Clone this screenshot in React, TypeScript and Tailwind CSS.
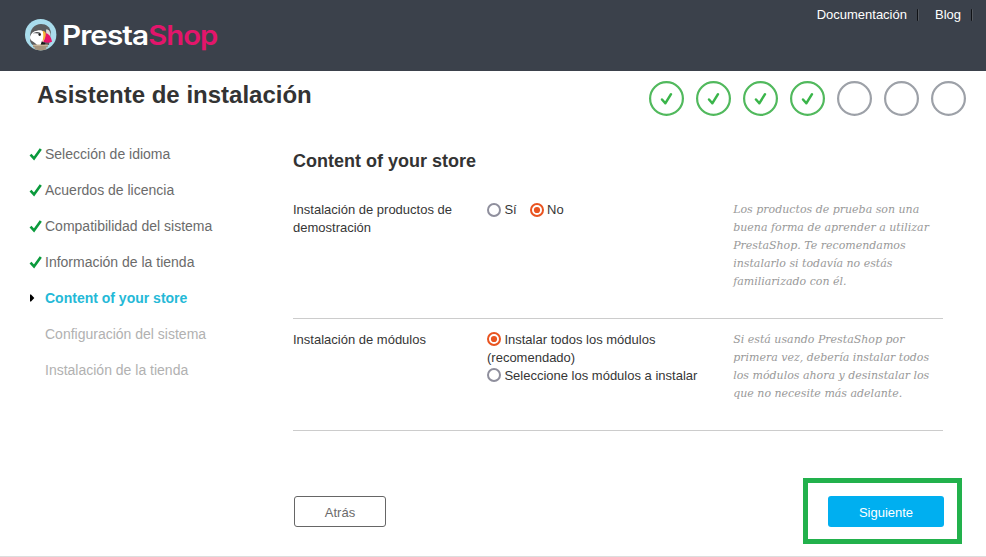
import React from "react";

function Logo() {
  return (
    <svg width="198" height="44" viewBox="0 0 198 44" role="img" aria-label="PrestaShop">
      <defs>
        <clipPath id="badge">
          <circle cx="16.700" cy="15.700" r="15.700" />
        </clipPath>
      </defs>
      <g clipPath="url(#badge)">
        <rect width="34" height="32" fill="#a9dcec" />
        <path d="M6 18C6 10 10.500 5 17 5C22.500 5 26 8 26.800 13L25 26H10C7 24 6 22 6 18Z" fill="#5b5c5e" />
        <path d="M6 18C7 14.500 9.500 12 13 11.800C17 10.500 20.500 12 21 17C21 22 20 25 17 26.500H10.500C7.500 24 6 21.500 6 18Z" fill="#fff" />
        <path d="M6 20C8 22.500 11 23.500 13.500 26.500H9.500C7 25 6 23 6 20Z" fill="#5b5c5e" />
        <path d="M9 14.500C11 12.800 14.500 12.500 16.500 14L16 15C14 14.200 11.500 14 9 14.500Z" fill="#5b5c5e" />
        <circle cx="15.700" cy="15.600" r="1.300" fill="#222" />
        <path d="M22 10.500C24.500 10 26.500 12 26.200 16.500L22.500 18Z" fill="#dededb" />
        <path d="M18.700 11.800C21.500 12 22.800 15 21.800 18.500L18.200 23C19.600 19 19.600 15.500 18.700 11.800Z" fill="#f6b333" />
        <path d="M21.700 14.200C25 14.500 27.500 18.500 28 22.800C25 24.400 22 24 19 22.600C21 20 22 17.500 21.700 14.200Z" fill="#e71568" />
        <path d="M17.800 22.300L21.500 24.300L20.500 26H16.500Z" fill="#171717" />
        <path d="M9 25.800H23.800V28.300H22.300V32H10.500V28.300H9Z" fill="#a6947d" />
        <path d="M9 25.800H23.800V26.800H9Z" fill="#d1bea2" />
      </g>
      <text x="38" y="25.500" fill="#fff" textLength="86" lengthAdjust="spacingAndGlyphs" className="font-['Inter',sans-serif] text-[27px] font-semibold tracking-[-0.9px]">Presta</text>
      <text x="124.300" y="25.500" fill="#e3156b" textLength="69" lengthAdjust="spacingAndGlyphs" className="font-['Inter',sans-serif] text-[27px] font-semibold tracking-[-0.9px]">Shop</text>
    </svg>
  );
}

function Tick() {
  return (
    <svg width="14" height="13" viewBox="0 0 14 13" fill="none" stroke="#0a9a3c" strokeWidth="2.600">
      <path d="M1.500 6.700L5 10.500L11.800 0.900" />
    </svg>
  );
}

function ProgressDot({ done }: { done: boolean }) {
  return (
    <svg width="35" height="35" viewBox="0 0 35 35" fill="none">
      <circle cx="17.500" cy="17.500" r="16.400" stroke={done ? "#51b95d" : "#9da1a8"} strokeWidth="2.200" />
      {done && <path d="M13 18.500L16.300 22.300L22 13.200" stroke="#3ab54a" strokeWidth="2.500" strokeLinecap="round" strokeLinejoin="round" />}
    </svg>
  );
}

function Radio({ checked = false, className = "align-[-2px]" }: { checked?: boolean; className?: string }) {
  return (
    <svg className={`mr-[3.400px] inline-block ${className}`} width="14" height="14" viewBox="0 0 14 14" fill="none">
      <circle cx="7" cy="7" r="6" stroke={checked ? "#e95420" : "#8f8f9d"} strokeWidth="2" />
      {checked && <circle cx="7" cy="7" r="3.100" fill="#e95420" />}
    </svg>
  );
}

const steps = [
  { label: "Selección de idioma", state: "done" },
  { label: "Acuerdos de licencia", state: "done" },
  { label: "Compatibilidad del sistema", state: "done" },
  { label: "Información de la tienda", state: "done" },
  { label: "Content of your store", state: "current" },
  { label: "Configuración del sistema", state: "todo" },
  { label: "Instalación de la tienda", state: "todo" },
];

const stepColor: Record<string, string> = {
  done: "text-[#6b6b6b]",
  current: "font-bold text-[#25b9d7]",
  todo: "text-[#b1b1b1]",
};

function Divider() {
  return <span className="mt-[9px] h-3 w-[2px] rounded-full border-r border-[#55595f] bg-[#101216]" />;
}

export default function App() {
  return (
    <div className="flex h-[557px] w-[986px] flex-col overflow-hidden bg-white font-['Liberation_Sans',Arial,sans-serif] text-[13px] leading-[18px] text-[#363636]">
      <header className="flex h-[71px] shrink-0 justify-between bg-[#3b414b]">
        <div className="pt-[19px] pl-6">
          <Logo />
        </div>
        <nav className="flex pr-[13px] text-white">
          <a className="mr-[10px] pt-[6px]">Documentación</a>
          <Divider />
          <a className="mr-[10px] ml-4 pt-[6px]">Blog</a>
          <Divider />
        </nav>
      </header>

      <div className="flex h-[65px] shrink-0 justify-between pr-5 pl-[37px]">
        <h1 className="pt-[9px] text-2xl leading-[30px] font-bold text-[#333]">Asistente de instalación</h1>
        <div className="flex gap-3 pt-[10px]">
          {[1, 2, 3, 4, 5, 6, 7].map((n) => (
            <ProgressDot key={n} done={n < 5} />
          ))}
        </div>
      </div>

      <div className="flex h-[342px] shrink-0">
        <ul className="w-[293px] shrink-0 pl-[29px] text-sm">
          {steps.map((step) => (
            <li key={step.label} className={`flex h-9 items-center ${stepColor[step.state]}`}>
              <span className="w-4 shrink-0">
                {step.state === "done" && <Tick />}
                {step.state === "current" && (
                  <svg width="6" height="8" viewBox="0 0 6 8" fill="#000">
                    <path d="M1 0.500H2L5.300 4L2 7.500H1Z" />
                  </svg>
                )}
              </span>
              {step.label}
            </li>
          ))}
        </ul>

        <main className="w-[650px]">
          <h2 className="h-[65px] pt-[14px] text-lg leading-[22px] font-bold text-[#333]">Content of your store</h2>
          <section className="flex h-[118px] border-b border-[#ccc]">
            <p className="w-[194px] pr-5">Instalación de productos de demostración</p>
            <div className="w-[246px]">
              <label className="mr-[13px]"><Radio className="align-[-3px]" />Sí</label>
              <label><Radio checked className="align-[-3px]" />No</label>
            </div>
            <p className="w-[210px] pl-[0.200px] font-['DejaVu_Serif',serif] text-[11px] text-[#999] italic">
              Los productos de prueba son una<br />buena forma de aprender a utilizar<br />PrestaShop. Te recomendamos<br />instalarlo si todavía no estás<br />familiarizado con él.
            </p>
          </section>
          <section className="flex h-[112px] border-b border-[#ccc] pt-3">
            <p className="w-[194px]">Instalación de módulos</p>
            <div className="w-[246px]">
              <label className="block"><Radio checked />Instalar todos los módulos<br />(recomendado)</label>
              <label className="block"><Radio />Seleccione los módulos a instalar</label>
            </div>
            <p className="w-[210px] pl-[0.200px] font-['DejaVu_Serif',serif] text-[11px] text-[#999] italic">
              Si está usando PrestaShop por<br />primera vez, debería instalar todos<br />los módulos ahora y desinstalar los<br />que no necesite más adelante.
            </p>
          </section>
        </main>
      </div>

      <footer className="flex h-[79px] shrink-0 items-start justify-between border-b border-[#ddd] pr-6 pl-[294px]">
        <button className="mt-[18px] h-[31px] w-[92px] rounded-[3px] border border-[#666] pt-[2px] text-[#6b6b6b]">Atrás</button>
        <div className="flex h-[66px] w-[159px] items-start border-5 border-[#22b14c] pt-[13px] pl-5">
          <button className="h-[31px] w-[116px] rounded-[3px] bg-[#00aff0] pt-[2px] text-white">Siguiente</button>
        </div>
      </footer>
    </div>
  );
}
